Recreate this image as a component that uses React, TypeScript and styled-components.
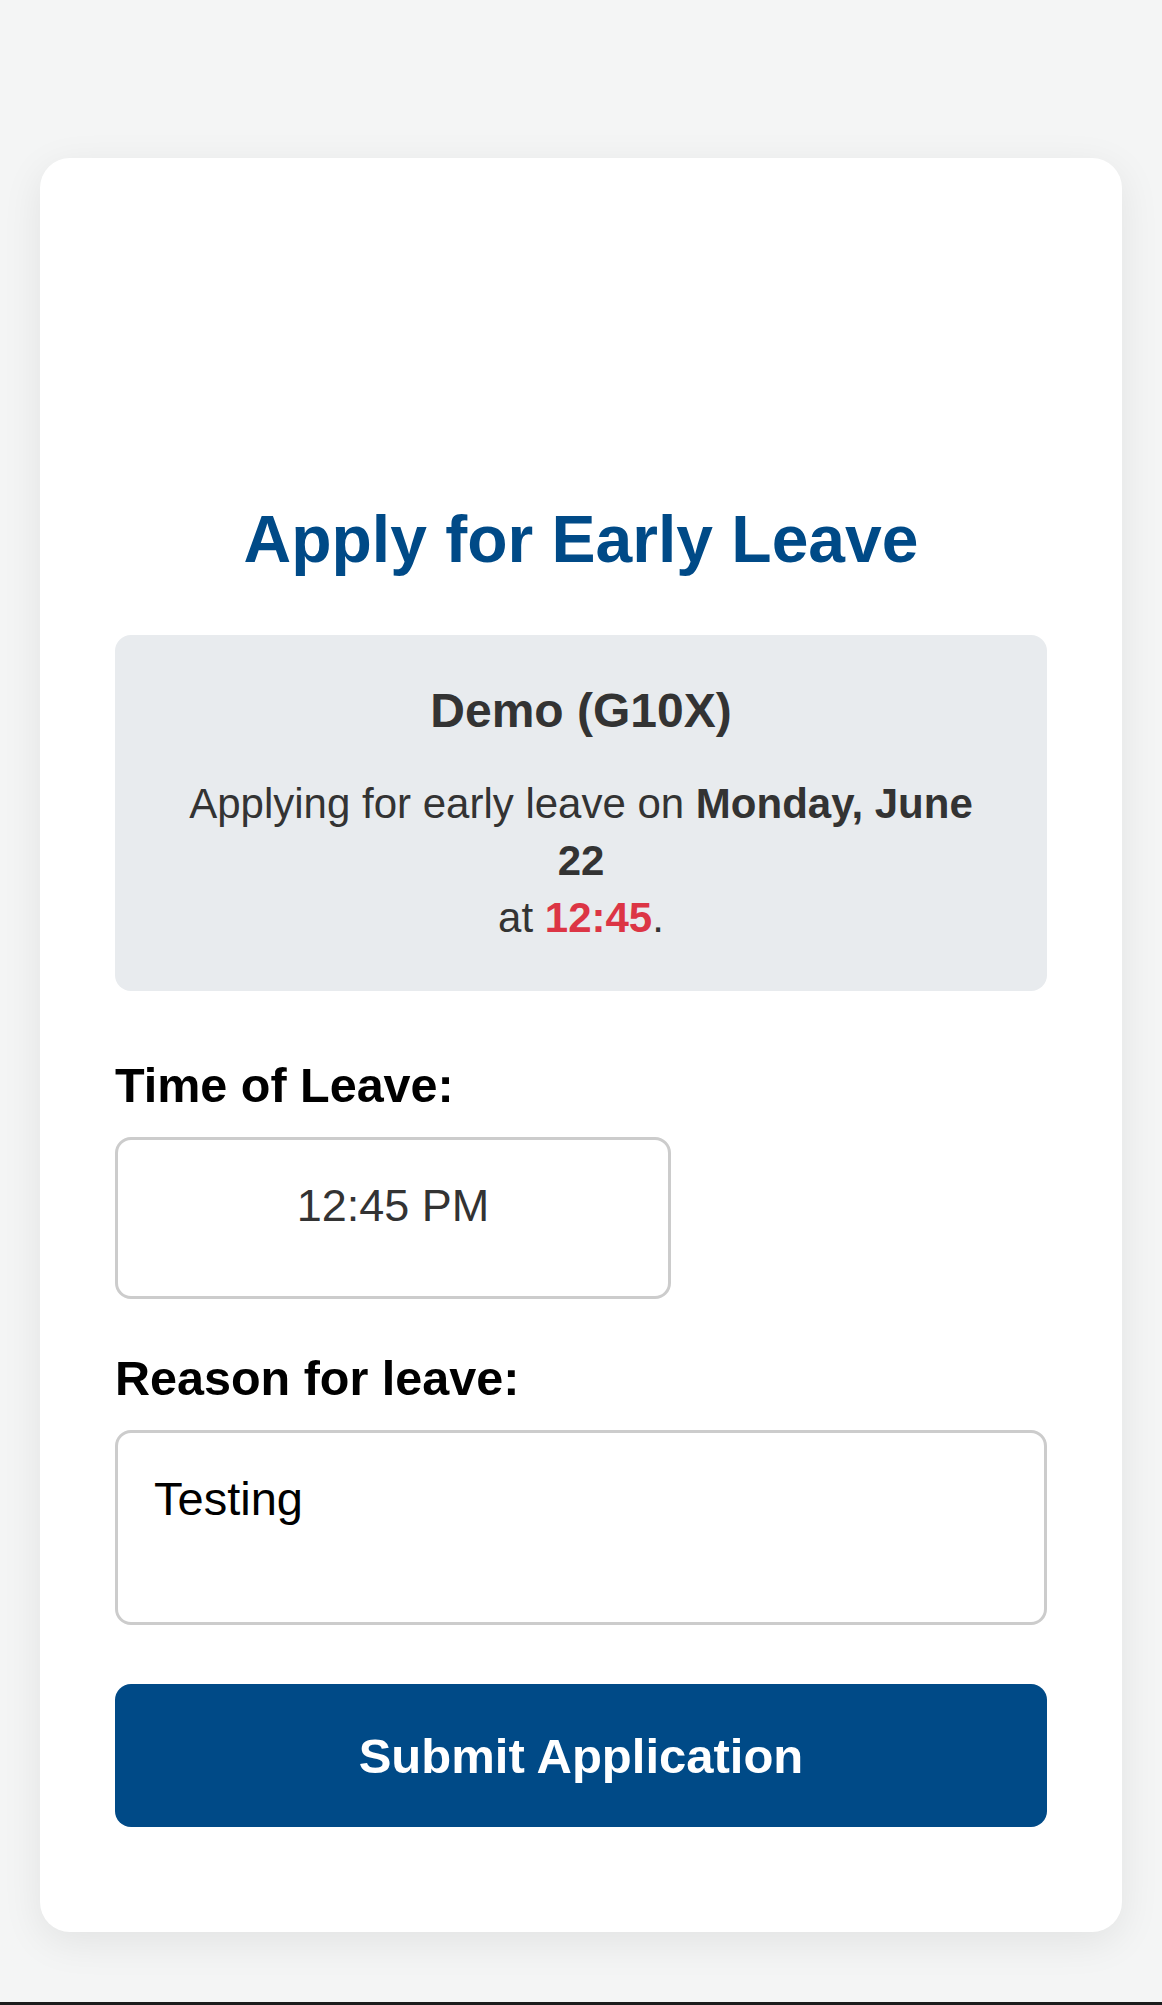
import styled, { createGlobalStyle } from "styled-components";

const GlobalStyle = createGlobalStyle`
    * {
        box-sizing: border-box;
    }

    body {
        margin: 0;
        background: #f4f5f5;
        font-family: "Liberation Sans", Arial, Helvetica, sans-serif;
        color: #333;
    }
`;

const Page = styled.div`
    min-height: 100vh;
    padding: 158px 40px 0;
    border-bottom: 3px solid #1c1c1c;
`;

const Card = styled.main`
    background: #ffffff;
    border-radius: 30px;
    box-shadow: 0 10px 40px rgba(0, 0, 0, 0.08);
    padding: 60px 75px 105px;
`;

// space the (missing) school logo takes up above the title
const LogoSpace = styled.div`
    height: 281px;
`;

const Title = styled.h1`
    margin: 0 0 56px;
    font-size: 66px;
    line-height: 80px;
    font-weight: 700;
    color: #004a87;
    text-align: center;
`;

const InfoBox = styled.section`
    background: #e8ebee;
    border-radius: 16px;
    padding: 48px 60px 45px;
    text-align: center;
`;

const StudentName = styled.h3`
    margin: 0;
    font-size: 48px;
    line-height: 56px;
    font-weight: 700;
    color: #333;
`;

const InfoText = styled.p`
    margin: 36px 0 0;
    font-size: 42px;
    line-height: 57px;
    color: #333;
`;

const Strong = styled.strong<{ $danger?: boolean }>`
    font-weight: 700;
    color: ${(p) => (p.$danger ? "#dc3545" : "#333")};
`;

const Form = styled.form`
    display: flex;
    flex-direction: column;
`;

const Label = styled.label<{ $top: number }>`
    display: block;
    margin: ${(p) => p.$top}px 0 24px;
    font-size: 48.5px;
    line-height: 56px;
    font-weight: 700;
    color: #000;
`;

const TimeInput = styled.input`
    width: 556px;
    height: 162px;
    padding: 0 20px 24px;
    border: 3px solid #cccccc;
    border-radius: 16px;
    background: #fff;
    font-family: inherit;
    font-size: 45px;
    color: #333;
    text-align: center;
    outline: none;
`;

const ReasonInput = styled.textarea`
    width: 100%;
    height: 195px;
    padding: 39px 36px;
    border: 3px solid #cccccc;
    border-radius: 16px;
    background: #fff;
    font-family: inherit;
    font-size: 47px;
    line-height: 1.15;
    color: #000;
    resize: none;
    outline: none;
`;

const SubmitButton = styled.button`
    margin-top: 59px;
    height: 143px;
    width: 100%;
    border: none;
    border-radius: 16px;
    background: #004a87;
    color: #fff;
    font-family: inherit;
    font-size: 49px;
    font-weight: 700;
    cursor: pointer;
`;

export default function App() {
    return (
        <>
            <GlobalStyle />
            <Page>
                <Card>
                    <LogoSpace />
                    <Title>Apply for Early Leave</Title>
                    <InfoBox>
                        <StudentName>Demo (G10X)</StudentName>
                        <InfoText>
                            Applying for early leave on <Strong>Monday, June 22</Strong>
                            <br />
                            at <Strong $danger>12:45</Strong>.
                        </InfoText>
                    </InfoBox>
                    <Form onSubmit={(e) => e.preventDefault()}>
                        <Label $top={66} htmlFor="leave-time">Time of Leave:</Label>
                        <TimeInput id="leave-time" type="text" defaultValue="12:45 PM" readOnly />
                        <Label $top={51} htmlFor="leave-reason">Reason for leave:</Label>
                        <ReasonInput id="leave-reason" defaultValue="Testing" />
                        <SubmitButton type="submit">Submit Application</SubmitButton>
                    </Form>
                </Card>
            </Page>
        </>
    );
}
